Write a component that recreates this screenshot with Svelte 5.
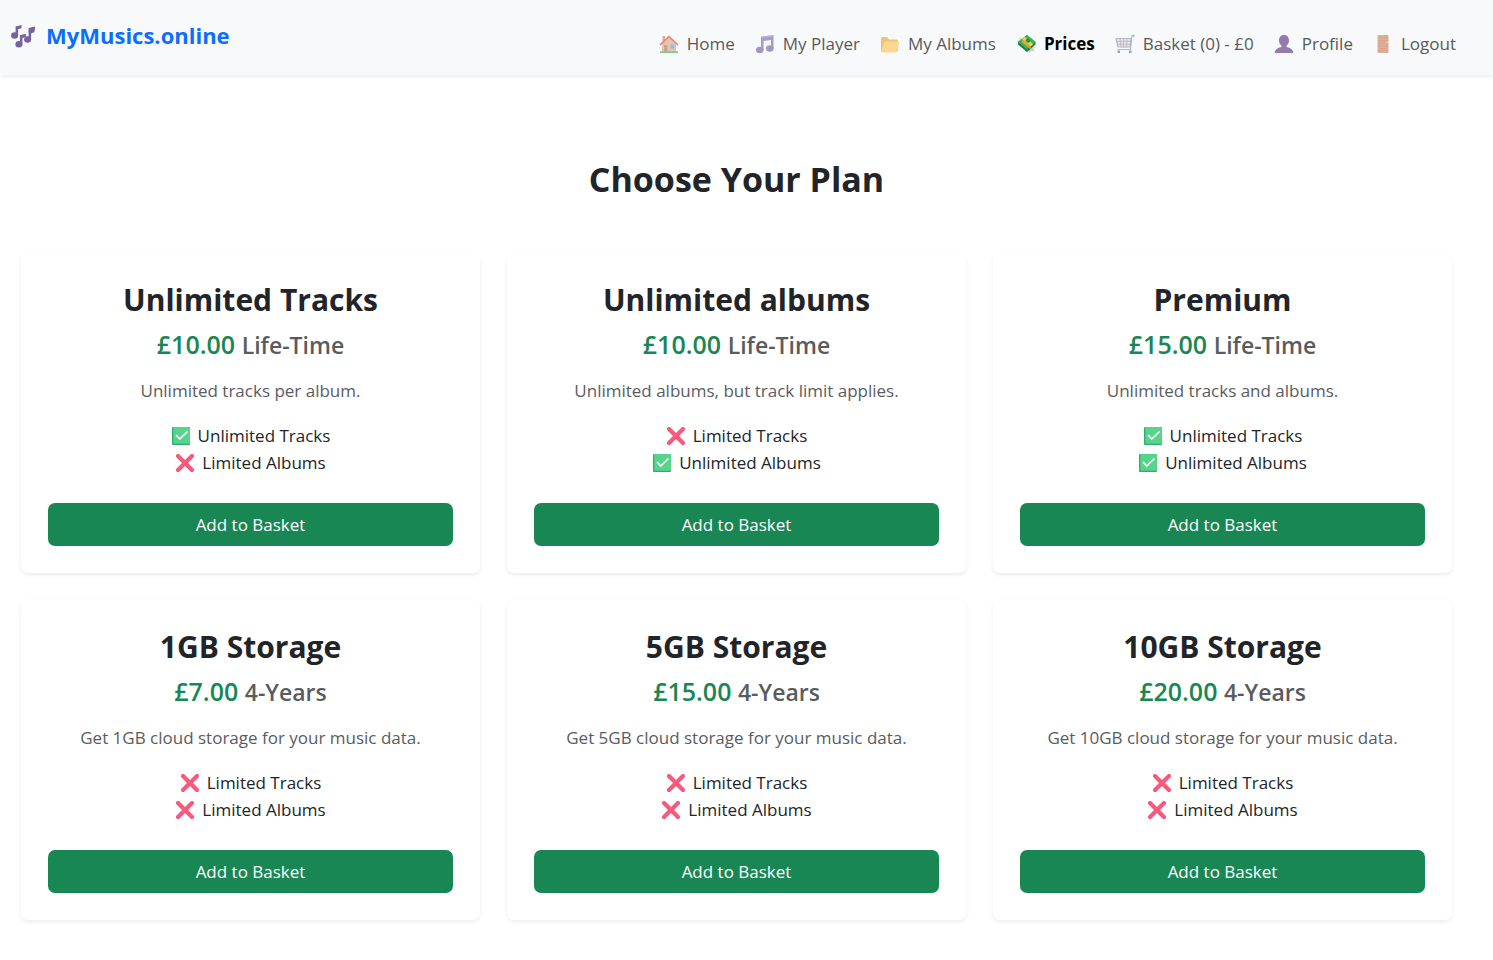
<script>
  const links = [
    { icon: 'home', label: 'Home' },
    { icon: 'note', label: 'My Player' },
    { icon: 'folder', label: 'My Albums' },
    { icon: 'money', label: 'Prices', active: true },
    { icon: 'cart', label: 'Basket (0) - £0' },
    { icon: 'person', label: 'Profile' },
    { icon: 'door', label: 'Logout' }
  ];

  const plans = [
    { name: 'Unlimited Tracks', price: '£10.00', term: 'Life-Time', text: 'Unlimited tracks per album.', tracks: true, albums: false },
    { name: 'Unlimited albums', price: '£10.00', term: 'Life-Time', text: 'Unlimited albums, but track limit applies.', tracks: false, albums: true },
    { name: 'Premium', price: '£15.00', term: 'Life-Time', text: 'Unlimited tracks and albums.', tracks: true, albums: true },
    { name: '1GB Storage', price: '£7.00', term: '4-Years', text: 'Get 1GB cloud storage for your music data.', tracks: false, albums: false },
    { name: '5GB Storage', price: '£15.00', term: '4-Years', text: 'Get 5GB cloud storage for your music data.', tracks: false, albums: false },
    { name: '10GB Storage', price: '£20.00', term: '4-Years', text: 'Get 10GB cloud storage for your music data.', tracks: false, albums: false }
  ];
</script>

{#snippet glyph(name)}
  <svg class="icon" viewBox="0 0 20 20" aria-hidden="true">
    {#if name === 'home'}
      <path d="M3 9.500 10 3l7 6.500V18H3z" fill="#dfa986" />
      <path d="M3.500 2h2.500v5L3.500 9z" fill="#c4875f" />
      <path d="M5 11h3.500v7H5z" fill="#b0785a" />
      <path d="M11.500 10.500h4v4h-4z" fill="#45a5ee" />
      <path d="M1.500 10.500 10 2.500l8.500 8" fill="none" stroke="#e0413d" stroke-width="1.700" stroke-linecap="round" stroke-linejoin="round" />
      <path d="M1 17.300h18V19H1z" fill="#3fae5c" />
    {:else if name === 'note'}
      <path d="M6 2.500 18.500 1v13.500H16V6L8.500 6.900V16H6z" fill="#7d6bb0" />
      <ellipse cx="4.800" cy="16" rx="3.800" ry="3.300" fill="#7463a6" />
      <ellipse cx="14.800" cy="14.500" rx="3.800" ry="3.200" fill="#7463a6" />
      <path d="M7 3.400 17.500 2.100" stroke="#a294cf" stroke-width="1" />
    {:else if name === 'folder'}
      <path d="M1 4.500Q1 3 2.500 3H7l2 2.500h7.500Q18 5.500 18 7v10H1z" fill="#eda52d" />
      <path d="M5.500 7.500h12.300q1.500 0 1.200 1.500l-1.400 7.700q-.3 1.800-1.800 1.800H2q-1 0-.8-1L4 8.500q.3-1 1.500-1z" fill="#fdc657" />
    {:else if name === 'money'}
      <path d="m12 12 4 1.500 3.500-.5-2 2 1 2.500-3-.5L13 19z" fill="#cfcfd8" />
      <path d="M5.500 9 .5 7l3-.8L2.500 3 7 5.500z" fill="#d8d8df" />
      <path d="M11 1 19.500 8v2.500L11 18l-9-7.500V8z" fill="#15813b" />
      <path d="M11 1 19.500 8 11 15.500 2 8z" fill="#32b75f" />
      <path d="m6 5 2.800-2.200 8.500 7.500-2.700 2.300z" fill="#ffc74d" />
      <path d="m6 5 8.600 7.600v2.700L6 8.300z" fill="#eca229" />
      <path d="M9.500 6.800q.2-2.300 2.500-2.500l2.500 2.200q-.2 2.300-2.700 2.500z" fill="#209849" />
    {:else if name === 'cart'}
      <g fill="none" stroke="#9690a3" stroke-width="1.200" stroke-linejoin="round" stroke-linecap="round">
        <path d="M1 4.500h15l-1 8.500H3z" fill="#dedce4" />
        <path d="M2 7.300h13.500M2.500 10.200h12.500M5 4.500l1 8.500M8.500 4.500V13M12 4.500l-.5 8.500" stroke-width=".8" />
        <path d="M18.500 1.500h-1.500L15.500 15.500H3" />
      </g>
      <path d="M2.500 16.500H5V19H2.500zM14 16.500h2.500V19H14z" fill="#3289d8" />
      <path d="M17.500.800h2v1.800h-2z" fill="#5b8fcf" />
    {:else if name === 'person'}
      <path d="M10 1c3 0 5 2 5 5.500 0 2.500-1 4-2.500 5.200V13c4 .5 6.500 2.500 7 6H.5c.5-3.500 3-5.500 7-6v-1.300C6 10.500 5 9 5 6.500 5 3 7 1 10 1z" fill="#5b3a85" />
    {:else if name === 'door'}
      <rect x="4.500" y="1" width="11" height="18" rx="1" fill="#d18a62" />
      <path d="M6 3h8v4H6zM6 9h8v3.500H6zM6 14.500h8V17H6z" fill="#cf865e" stroke="#bd7451" stroke-width=".6" />
      <circle cx="14.300" cy="8.500" r=".8" fill="#ffd38a" />
    {:else if name === 'check'}
      <rect x="1" y="1" width="18" height="18" rx="1" fill="#35aa70" />
      <rect x="2.300" y="1" width="16.700" height="16.800" rx=".8" fill="#57d48c" />
      <path d="m5.500 9.500 3.300 3.500L16 6" fill="none" stroke="#fff" stroke-width="1.700" stroke-linecap="round" stroke-linejoin="round" />
    {:else if name === 'cross'}
      <path d="M3 3 17 17M17 3 3 17" stroke="#ea4a70" stroke-width="4" stroke-linecap="round" />
      <path d="M3.200 2.800 17.200 16.800M17 2.800 3 16.800" stroke="#fb5a7c" stroke-width="3.200" stroke-linecap="round" />
    {/if}
  </svg>
{/snippet}

<header>
  <a class="brand" href="#home">
    <svg class="logo" viewBox="0 0 24 24" aria-hidden="true">
      <defs>
        <g id="quaver">
          <ellipse cx="3.600" cy="11.500" rx="3.500" ry="3.200" />
          <path d="M4.600 2.500 10.500 1v3.300l-3.400 1v6.200H4.600z" />
        </g>
      </defs>
      <g fill="#75629f">
        <use href="#quaver" />
        <use href="#quaver" x="4.300" y="8.700" />
        <use href="#quaver" x="13" y="4" />
        <path d="M17.600 8V4L24 2.500v3.300l-3.900 1V10z" />
      </g>
    </svg>
    MyMusics.online
  </a>
  <nav>
    {#each links as link}
      <a class="link" class:active={link.active} href="#{link.icon}">{@render glyph(link.icon)}{link.label}</a>
    {/each}
  </nav>
</header>

<main>
  <h1>Choose Your Plan</h1>
  <div class="plans">
    {#each plans as plan}
      <section class="card">
        <h2>{plan.name}</h2>
        <p class="price">{plan.price} <small>{plan.term}</small></p>
        <p class="text">{plan.text}</p>
        <ul>
          <li>{@render glyph(plan.tracks ? 'check' : 'cross')}{plan.tracks ? 'Unlimited' : 'Limited'} Tracks</li>
          <li>{@render glyph(plan.albums ? 'check' : 'cross')}{plan.albums ? 'Unlimited' : 'Limited'} Albums</li>
        </ul>
        <button type="button">Add to Basket</button>
      </section>
    {/each}
  </div>
</main>

<style>
  :global(body) {
    margin: 0;
    background: #fff;
    color: #212529;
    font-family: "Open Sans", "Noto Sans", sans-serif;
    font-size: 17px;
    line-height: 27px;
  }
  header {
    display: flex;
    justify-content: space-between;
    align-items: flex-start;
    box-sizing: border-box;
    min-height: 75px;
    padding: 18px 37px 18px 11px;
    background: #f8f9fa;
    box-shadow: 0 2px 4px rgba(0, 0, 0, 0.075);
  }
  a {
    text-decoration: none;
  }
  .brand {
    display: flex;
    align-items: center;
    gap: 11px;
    color: #0d6efd;
    font-size: 22px;
    line-height: 35px;
    font-weight: 700;
  }
  .logo {
    width: 24px;
    height: 24px;
  }
  nav {
    display: flex;
    flex-wrap: wrap;
    gap: 20px;
    padding-top: 12px;
  }
  .link {
    display: flex;
    align-items: center;
    color: #595a5a;
  }
  .icon {
    width: 20px;
    height: 20px;
    margin-right: 8px;
    flex: none;
  }
  .link .icon {
    opacity: 0.65;
  }
  .link.active {
    color: #000;
    font-weight: 700;
  }
  .link.active .icon {
    opacity: 1;
  }
  main {
    padding: 82px 41px 40px 21px;
    text-align: center;
  }
  h1,
  h2,
  p,
  ul {
    margin: 0;
    padding: 0;
  }
  h1 {
    margin-bottom: 52px;
    font-size: 34px;
    line-height: 44px;
    font-weight: 700;
  }
  .plans {
    display: grid;
    grid-template-columns: repeat(3, 1fr);
    gap: 27px;
  }
  .card {
    padding: 27px;
    border-radius: 7px;
    background: #fff;
    box-shadow: 0 2px 4px rgba(0, 0, 0, 0.075);
  }
  h2 {
    margin-bottom: 8px;
    font-size: 30px;
    line-height: 40px;
    font-weight: 700;
  }
  .price {
    margin-bottom: 17px;
    color: #198754;
    font-size: 25px;
    line-height: 32px;
    font-weight: 600;
  }
  small {
    color: #595c5f;
    font-size: 23px;
    line-height: 1;
  }
  .text {
    margin-bottom: 18px;
    color: #595c5f;
  }
  ul {
    margin-bottom: 27px;
    list-style: none;
  }
  li {
    display: flex;
    justify-content: center;
    align-items: center;
  }
  li .icon {
    margin-right: 7px;
  }
  button {
    display: block;
    width: 100%;
    padding: 8px 12px;
    border: 0;
    border-radius: 7px;
    background: #198754;
    color: #fff;
    font: inherit;
    cursor: pointer;
  }
</style>
